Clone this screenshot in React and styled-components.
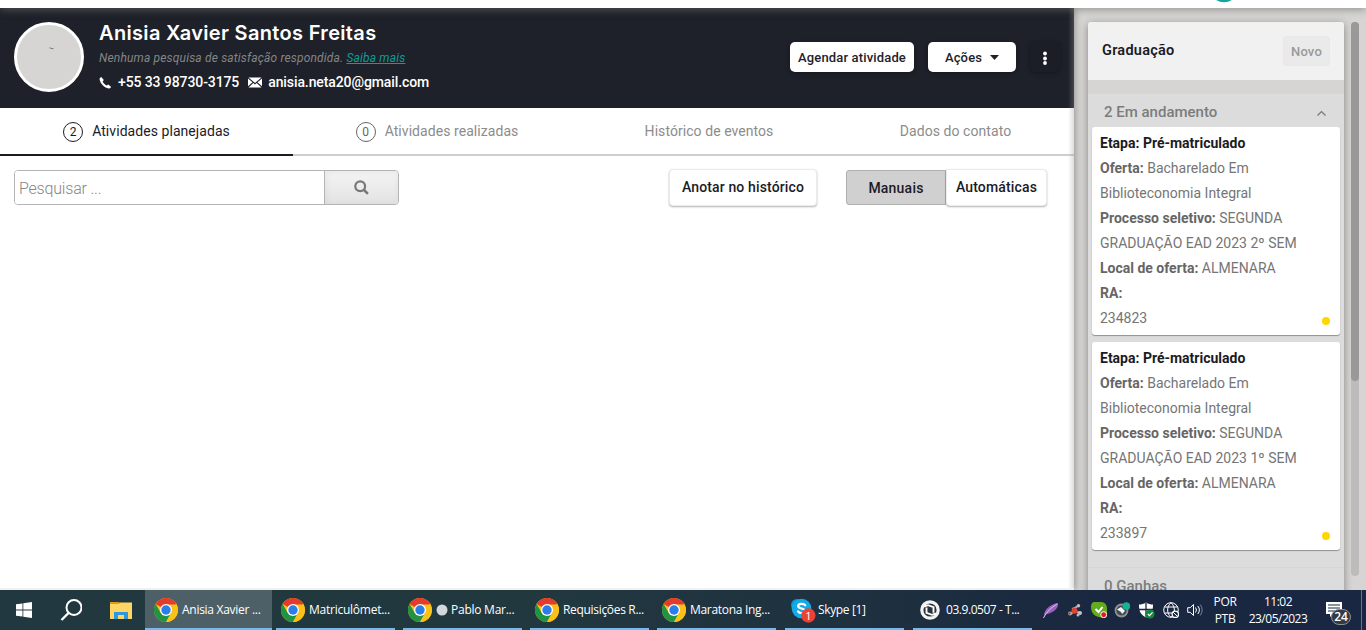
import React from "react";
import styled, { createGlobalStyle } from "styled-components";

const Global = createGlobalStyle`
  * { box-sizing: border-box; }
  body { margin: 0; background: #fff; overflow: hidden; font-family: Roboto, sans-serif; }
  button, input { font-family: inherit; }
  svg { display: block; flex: none; }
`;

const Screen = styled.div`
  width: 1366px;
  height: 630px;
  display: flex;
  flex-direction: column;
  overflow: hidden;
`;
const TopStrip = styled.div`
  height: 8px;
  flex: none;
  background: #fff;
  box-shadow: 0 1px 8px rgba(110, 110, 105, 0.75);
  position: relative;
  z-index: 3;
  padding-left: 1215px;
  overflow: visible;
  clip-path: inset(0 0 -14px 0);
`;
const Body = styled.div`
  height: 582px;
  flex: none;
  display: flex;
`;
const Main = styled.main`
  width: 1074px;
  background: #fff;
  position: relative;
  z-index: 1;
  box-shadow: 1px 0 7px rgba(0, 0, 0, 0.32);
  border-bottom: 2px solid #f1f1f1;
  &::after {
    content: "";
    position: absolute;
    inset: 0 0 0 auto;
    width: 6px;
    background: linear-gradient(to right, rgba(150, 150, 150, 0), rgba(150, 150, 150, 0.32));
  }
`;
const Hero = styled.header`
  height: 100px;
  background: #1e2129;
  display: flex;
  padding: 14px 14px 0;
`;
const Avatar = styled.div`
  width: 70px;
  height: 70px;
  border-radius: 50%;
  border: 3px solid #fff;
  background: #d6d5d3;
  padding: 22px 0 0 32px;
`;
const Identity = styled.div`
  margin-left: 15px;
  width: 691px;
  white-space: nowrap;
`;
const Name = styled.h1`
  margin: 0;
  font: 600 20px/22px Inter, sans-serif;
  letter-spacing: 0.33px;
  color: #fff;
`;
const Survey = styled.div`
  font: italic 400 12px/16px Roboto, sans-serif;
  letter-spacing: 0.17px;
  color: #858585;
  margin-top: 6px;
  a { color: #0f9d96; text-decoration: underline; }
`;
const Contacts = styled.div`
  display: flex;
  align-items: center;
  color: #fff;
  font: 500 14px/18px Roboto, sans-serif;
  letter-spacing: -0.1px;
  margin-top: 7px;
  svg { margin-right: 6px; }
  span { margin-right: 9px; }
`;
const HeroActions = styled.div`
  display: flex;
  gap: 14px;
  padding-top: 20px;
`;
const HeroButton = styled.button`
  width: ${(p) => p.$w}px;
  height: 30px;
  border: 0;
  padding: ${(p) => (p.$dark ? 2 : 0)}px 0 0;
  border-radius: 5px;
  display: flex;
  align-items: center;
  justify-content: center;
  gap: 8px;
  background: ${(p) => (p.$dark ? "#1b1e25" : "#fff")};
  color: #1e2129;
  font-size: 13px;
  font-weight: 500;
  letter-spacing: 0.15px;
  white-space: nowrap;
  box-shadow: 0 1px 4px rgba(0, 0, 0, 0.35);
`;
const Tabs = styled.nav`
  display: flex;
  height: 48px;
`;
const Tab = styled.div`
  width: ${(p) => p.$w}px;
  border-bottom: 2px solid ${(p) => (p.$active ? "#1b1b27" : "#cecece")};
  display: flex;
  align-items: center;
  justify-content: center;
  gap: 9px;
  font-size: 14px;
  letter-spacing: 0.06px;
  color: ${(p) => (p.$active ? "#1b1b27" : "#8c8c8c")};
`;
const Count = styled.span`
  width: 20px;
  height: 20px;
  margin-top: 1px;
  border: 1px solid ${(p) => (p.$active ? "#1b1b27" : "#666")};
  color: ${(p) => (p.$active ? "#1b1b27" : "#666")};
  border-radius: 50%;
  font-size: 12px;
  line-height: 18px;
  letter-spacing: 0;
  text-align: center;
`;
const Toolbar = styled.div`
  display: flex;
  padding: 13px 0 0 14px;
`;
const Search = styled.div`
  display: flex;
  width: 385px;
  height: 35px;
  margin: 1px 270px 0 0;
  border: 1px solid #b4b4b4;
  border-radius: 4px;
  overflow: hidden;
  input {
    width: 309px;
    border: 0;
    outline: 0;
    padding: 1px 4px 0;
    font-size: 16px;
    font-weight: 300;
    letter-spacing: -0.2px;
    color: #333;
  }
  input::placeholder { color: #858585; }
`;
const SearchButton = styled.button`
  flex: 1;
  border: 0;
  border-left: 1px solid #b4b4b4;
  background: linear-gradient(#f4f4f4, #e3e3e3);
  box-shadow: inset 1px 1px 6px rgba(130, 130, 130, 0.12);
  display: flex;
  align-items: center;
  justify-content: center;
  padding: 0 1px 0 0;
`;
const ToolButton = styled.button`
  width: ${(p) => p.$w}px;
  height: ${(p) => (p.$pressed ? 35 : 37)}px;
  margin: ${(p) => (p.$pressed ? "1px 0 0 29px" : "0")};
  padding: ${(p) => (p.$pressed ? "1px 0 0" : "0 0 2px")};
  border: 1px solid ${(p) => (p.$pressed ? "#b0b0b0" : "#ebebeb")};
  border-radius: ${(p) => (p.$pressed ? "3px 0 0 3px" : p.$joined ? "0 4px 4px 4px" : "4px")};
  background: ${(p) => (p.$pressed ? "#d0d0d0" : "#fff")};
  color: #1b1b27;
  font-size: 14px;
  font-weight: 500;
  letter-spacing: ${(p) => p.$ls}px;
  white-space: nowrap;
  box-shadow: ${(p) => (p.$pressed ? "none" : "0 1px 2px rgba(0,0,0,0.3)")};
`;
const Aside = styled.aside`
  width: 292px;
  background: #d6d5d3;
  padding: 14px 7px 0 14px;
  display: flex;
  gap: 7px;
  overflow: hidden;
`;
const Panel = styled.section`
  width: 256px;
  height: 590px;
  border-radius: 3px 3px 0 0;
  background: #dcdcdc;
  box-shadow: 0 2px 9px rgba(0, 0, 0, 0.38);
`;
const PanelHead = styled.header`
  height: 58px;
  border-radius: 3px 3px 0 0;
  background: #f1f1f1;
  display: flex;
  align-items: center;
  justify-content: space-between;
  padding: 0 14px;
  font-size: 14.5px;
  letter-spacing: 0.25px;
  color: #1b1b27;
  b { margin-top: -1px; font-weight: 600; }
`;
const NewButton = styled.button`
  width: 47px;
  height: 30px;
  padding: 0;
  border: 1px solid #e7e7e7;
  border-radius: 4px;
  background: #eaeaea;
  color: #999;
  font-size: 13px;
  font-weight: 500;
  letter-spacing: 0.2px;
`;
const PanelGap = styled.div`
  height: 14px;
  background: #d6d5d3;
`;
const SectionHead = styled.div`
  height: ${(p) => p.$h}px;
  display: flex;
  align-items: center;
  justify-content: space-between;
  padding: 1px 17px 0 16px;
  border-top: 1px solid ${(p) => (p.$line ? "#d6d6d6" : "#dcdcdc")};
  font-size: 15px;
  font-weight: 500;
  color: #7c7c7c;
  svg { margin-top: 3px; }
`;
const Cards = styled.div`
  padding: 0 4px;
  height: 440px;
  display: flex;
  flex-direction: column;
  gap: 7px;
`;
const Card = styled.article`
  height: 208px;
  padding: 4px 8px;
  border-radius: 3px;
  background: #fff;
  box-shadow: 0 1px 1px rgba(0, 0, 0, 0.35);
  font-size: 14px;
  line-height: 25px;
  color: #757575;
  position: relative;
  b { font-weight: 700; color: #666; }
  &::after {
    content: "";
    position: absolute;
    right: 10px;
    bottom: 10px;
    width: 8px;
    height: 8px;
    border-radius: 50%;
    background: #ffd600;
  }
`;
const Stage = styled.div`
  font-weight: 700;
  color: #1b1b1f;
`;
const Field = styled.div`
  width: 215px;
`;
const Track = styled.div`
  width: 8px;
  height: 554px;
  border-radius: 4px;
  background: #bcbcbc;
`;
const Thumb = styled.div`
  height: 359px;
  border-radius: 4px;
  background: #999;
`;
const Taskbar = styled.footer`
  height: 40px;
  flex: none;
  position: relative;
  z-index: 4;
  display: flex;
  color: #fff;
  font: 400 12px/16px "Open Sans", "Noto Sans", sans-serif;
  background: linear-gradient(to right, #213840 0%, #22383f 40%, #1e303f 65%, #1a2740 80%, #1a2743 100%);
`;
const Launcher = styled.div`
  width: 145px;
  display: flex;
  align-items: center;
  gap: 28px;
  padding-left: 16px;
`;
const Task = styled.div`
  width: ${(p) => p.$w}px;
  margin-right: ${(p) => p.$gap}px;
  padding: 1px 0 0 ${(p) => p.$pl}px;
  height: 40px;
  display: flex;
  align-items: center;
  gap: ${(p) => p.$space ?? 4}px;
  background: ${(p) => (p.$active ? "#4e6067" : "transparent")};
  border-bottom: 2px solid #76b9ed;
  white-space: nowrap;
`;
const TaskLabel = styled.span`
  font-size: 12px;
  letter-spacing: ${(p) => p.$ls}px;
`;
const Tray = styled.div`
  display: flex;
  align-items: center;
  gap: 7.8px;
  width: 165px;
  flex: none;
`;
const TrayText = styled.div`
  width: ${(p) => p.$w}px;
  flex: none;
  text-align: center;
  line-height: 17px;
  padding: 3px 0 0 2px;
  white-space: nowrap;
  letter-spacing: ${(p) => p.$ls}px;
`;
const Notices = styled.div`
  width: 48px;
  padding: 10px 0 0 10px;
  border-right: 1px solid #69738a;
`;

const Chrome = () => (
  <svg width="24" height="24" viewBox="0 0 24 24">
    <circle cx="12" cy="12" r="12" fill="#fbc116" />
    <path d="M12 12 1.6 6A12 12 0 0 1 22.4 6Z" fill="#e33b2e" />
    <path d="M1.6 6A12 12 0 0 0 12 24L17.2 15 12 12 6.8 15Z" fill="#229342" />
    <path d="M12 6.5H22.6A12 12 0 0 1 12 24L17 15Z" fill="#fbc116" />
    <circle cx="12" cy="12" r="6" fill="#fff" />
    <circle cx="12" cy="12" r="4.7" fill="#2b7de9" />
  </svg>
);

const RingLogo = () => (
  <svg width="20" height="22" viewBox="0 0 20 22">
    <circle cx="10" cy="11" r="8.2" fill="#27343d" stroke="#f4f4f4" strokeWidth="3.2" />
    <path d="M4 7.5 8 6.2l5.5 2v5.500M16 14.500l-4 1.300-5.500-2V8.500" fill="none" stroke="#fff" strokeWidth="1.900" />
  </svg>
);

const SkypeIcon = () => (
  <svg width="26" height="26" viewBox="0 0 26 26">
    <circle cx="7" cy="8" r="6" fill="#0796df" />
    <circle cx="15" cy="16" r="6" fill="#0796df" />
    <circle cx="11.5" cy="11.5" r="9.8" fill="#16a9e8" />
    <path d="M15.2 8.2C13.8 6.2 8.2 6.2 8.2 9c0 3.3 7 1.7 7 5 0 2.700-5.600 2.800-7.200.4" fill="none" stroke="#fff" strokeWidth="2.3" strokeLinecap="round" />
    <circle cx="18.3" cy="18.500" r="7.2" fill="#ea4335" />
    <text x="18.3" y="22.500" textAnchor="middle" fill="#fff" fontSize="11" fontFamily="Open Sans, sans-serif">1</text>
  </svg>
);

const tabs = [
  { w: 293, n: 2, t: "Atividades planejadas", active: true },
  { w: 288, n: 0, t: "Atividades realizadas" },
  { w: 256, t: "Histórico de eventos" },
  { w: 237, t: "Dados do contato" },
];

const offers = [
  { term: "2º", ra: "234823" },
  { term: "1º", ra: "233897" },
];

const chromeTasks = [
  { w: 127, gap: 4, pl: 9, t: "Anisia Xavier ...", active: true, ls: -0.28 },
  { w: 119, gap: 8, pl: 5, t: "Matriculômet...", ls: -0.25 },
  { w: 119, gap: 8, pl: 5, t: "Pablo Mar...", dot: true, ls: -0.25 },
  { w: 119, gap: 8, pl: 5, t: "Requisições R...", ls: -0.32 },
  { w: 119, gap: 9, pl: 5, t: "Maratona Ing...", ls: -0.3 },
];

export default function App() {
  return (
    <Screen>
      <Global />
      <TopStrip>
        <svg width="18" height="3" viewBox="0 0 18 3">
          <path d="M1 0h16q-8 4.500-16 0z" fill="#12a5a0" />
        </svg>
      </TopStrip>
      <Body>
        <Main>
          <Hero>
            <Avatar>
              <svg width="5" height="3" viewBox="0 0 5 3"><path d="M.5.800 2 1.300l2.500.5" stroke="#777" fill="none" /></svg>
            </Avatar>
            <Identity>
              <Name>Anisia Xavier Santos Freitas</Name>
              <Survey>Nenhuma pesquisa de satisfação respondida. <a>Saiba mais</a></Survey>
              <Contacts>
                <svg width="13" height="13" viewBox="0 0 13 13"><path d="M2.300 1 .6 2.200C.2 6.700 5.700 12.500 10.600 12.400L12.200 10.900 9.300 8.500 7.600 9.400C5.900 8.700 4.400 7 3.700 5.400L4.800 4Z" fill="#fff" /></svg>
                <span>+55 33 98730-3175</span>
                <svg width="14" height="11" viewBox="0 0 14 11"><path d="M.5.500h13L7 6zM0 1.500 4.500 5.300 0 9.300zM14 1.500 9.500 5.300 14 9.300zM5.300 6 7 7.400 8.700 6l4.800 4.500H.5z" fill="#fff" /></svg>
                <span>anisia.neta20@gmail.com</span>
              </Contacts>
            </Identity>
            <HeroActions>
              <HeroButton $w={124}>Agendar atividade</HeroButton>
              <HeroButton $w={88}>
                Ações
                <svg width="9" height="5" viewBox="0 0 9 5"><path d="M0 0h9L4.500 5z" fill="#1e2129" /></svg>
              </HeroButton>
              <HeroButton $w={30} $dark>
                <svg width="4" height="14" viewBox="0 0 4 14"><g fill="#fff"><circle cx="2" cy="2.500" r="1.900" /><circle cx="2" cy="7.500" r="1.900" /><circle cx="2" cy="12" r="1.900" /></g></svg>
              </HeroButton>
            </HeroActions>
          </Hero>
          <Tabs>
            {tabs.map((t) => (
              <Tab key={t.t} $w={t.w} $active={t.active}>
                {t.n !== undefined && <Count $active={t.active}>{t.n}</Count>}
                {t.t}
              </Tab>
            ))}
          </Tabs>
          <Toolbar>
            <Search>
              <input placeholder="Pesquisar ..." />
              <SearchButton>
                <svg width="15" height="15" viewBox="0 0 15 15" fill="none" stroke="#777"><circle cx="6.200" cy="6.200" r="4.900" strokeWidth="2.200" /><path d="m9.700 9.700 4.200 4.200" strokeWidth="2.600" /></svg>
              </SearchButton>
            </Search>
            <ToolButton $w={148} $ls={0.14}>Anotar no histórico</ToolButton>
            <ToolButton $w={100} $ls={0.22} $pressed>Manuais</ToolButton>
            <ToolButton $w={101} $ls={0.16} $joined>Automáticas</ToolButton>
          </Toolbar>
        </Main>
        <Aside>
          <Panel>
            <PanelHead><b>Graduação</b><NewButton>Novo</NewButton></PanelHead>
            <PanelGap />
            <SectionHead $h={33}>
              2 Em andamento
              <svg width="11" height="7" viewBox="0 0 11 7"><path d="m1.500 5.500 4-4 4 4" fill="none" stroke="#777" strokeWidth="1.200" /></svg>
            </SectionHead>
            <Cards>
              {offers.map((o) => (
                <Card key={o.ra}>
                  <Stage>Etapa: Pré-matriculado</Stage>
                  <Field><b>Oferta:</b> Bacharelado Em Biblioteconomia Integral</Field>
                  <Field><b>Processo seletivo:</b> SEGUNDA GRADUAÇÃO EAD 2023 {o.term} SEM</Field>
                  <Field><b>Local de oferta:</b> ALMENARA</Field>
                  <Field><b>RA:</b></Field>
                  <Field>{o.ra}</Field>
                </Card>
              ))}
            </Cards>
            <SectionHead $h={36} $line>0 Ganhas</SectionHead>
          </Panel>
          <Track><Thumb /></Track>
        </Aside>
      </Body>
      <Taskbar>
        <Launcher>
          <svg width="16" height="16" viewBox="0 0 16 16" fill="#fff"><path d="M0 2.300 6.500 1.400V7.500H0zM7.300 1.300 16 0V7.500H7.300zM0 8.400H6.500V14.600L0 13.700zM7.300 8.400H16V16L7.300 14.700z" /></svg>
          <svg width="22" height="22" viewBox="0 0 22 22" fill="none" stroke="#fff" strokeWidth="2"><circle cx="14" cy="8.500" r="7.500" /><path d="M8.500 14 1.500 21" strokeWidth="2.400" /></svg>
          <svg width="22" height="19" viewBox="0 0 22 19"><path d="M0 1h9l2 2h-11z" fill="#dc9b10" /><path d="M0 3h9l1-1.500h12V18H0z" fill="#ffd663" /><path d="M4 18v-7h14v7h-4v-4H8v4z" fill="#3096dd" /></svg>
        </Launcher>
        {chromeTasks.map((t) => (
          <Task key={t.t} $w={t.w} $gap={t.gap} $pl={t.pl} $active={t.active} $space={t.dot ? 3.5 : 4}>
            <Chrome />
            {t.dot && <svg width="12" height="12" viewBox="0 0 12 12"><circle cx="6" cy="6" r="5.500" fill="#d3d8dc" /></svg>}
            <TaskLabel $ls={t.ls}>{t.t}</TaskLabel>
          </Task>
        ))}
        <Task $w={119} $gap={9} $pl={5} $space={2}><SkypeIcon /><TaskLabel $ls={-0.35}>Skype [1]</TaskLabel></Task>
        <Task $w={119} $gap={11} $pl={7} $space={6}><RingLogo /><TaskLabel $ls={-0.45}>03.9.0507 - T...</TaskLabel></Task>
        <Tray>
          <svg width="16" height="18" viewBox="0 0 16 18"><path d="M1 15C1 8 8 3 15 2c1 5-5 10-11 11z" fill="#9a62bd" /><path d="M.5 17C4 10 8 7 14 3" stroke="#e3c4f4" fill="none" /></svg>
          <svg width="16" height="16" viewBox="0 0 16 16"><path d="m5 7 3-1 4-3M4 12l3-3M10 10l3 1" stroke="#a9aaad" strokeWidth="2" fill="none" /><circle cx="7.500" cy="8.800" r="3" fill="#e04433" /><circle cx="3" cy="11.500" r="2" fill="#b9a5a0" /><circle cx="2.500" cy="11.500" r="1" fill="#8d3b2d" /><circle cx="13" cy="11" r="2" fill="#c3c5c8" /><circle cx="11" cy="13" r="1.500" fill="#bbb" /><circle cx="11.500" cy="3.800" r="1.700" fill="#c9bab8" /></svg>
          <svg width="16" height="16" viewBox="0 0 16 16"><path d="M4 0h6c4 0 6 3 6 7v4c0 3-2 4.500-5 4.500C5 15.500 0 12 0 5c0-3 1-5 4-5z" fill="#62ab1d" /><path d="m4.500 7 3 3 4-5" fill="none" stroke="#fff" strokeWidth="2" /><circle cx="12.700" cy="12.700" r="3" fill="#e21b22" stroke="#fff" /></svg>
          <svg width="16" height="16" viewBox="0 0 16 16"><circle cx="7.500" cy="8.500" r="6" fill="#414850" stroke="#8d9297" strokeWidth="1.800" /><path d="M3 7.500 7 5l4 4-3 3-1-2z" fill="#f4f4f4" /><circle cx="12.300" cy="4" r="3.800" fill="#12b493" /></svg>
          <svg width="17" height="17" viewBox="0 0 17 17"><path d="M8 .5C6 2 3 2.500 1 2.500 1 9 2 12 8 15.500 14 12 15 9 15 2.500 13 2.500 10 2 8 .5z" fill="#fff" /><path d="M8 1v14M1 7.500h14" stroke="#1a2740" strokeWidth="1.300" /><circle cx="12" cy="12" r="4.600" fill="#10893e" /><path d="m9.800 12 1.700 1.700 3-3.300" stroke="#fff" fill="none" strokeWidth="1.200" /></svg>
          <svg width="16" height="16" viewBox="0 0 16 16" fill="none" stroke="#fff"><circle cx="8" cy="8" r="7.300" /><path d="M8 .7c-4.500 4-4.500 10.600 0 14.600M8 .7c4.500 4 4.500 10.600 0 14.600M1.500 5h13M1.500 11H9" /><circle cx="12.300" cy="12.300" r="3.200" fill="#1a2740" strokeWidth="1.300" /><path d="m10 10 4.600 4.600" /></svg>
          <svg width="16" height="16" viewBox="0 0 16 16" fill="none" stroke="#fff"><path d="M.7 5.700h2.500L6.500 2.500v11L3.200 10.300H.7z" /><path d="M8.500 5.500q2 2.500 0 5M10.800 4q3.200 4 0 8" /><path d="M13.200 2.500q4 5.500 0 11" stroke="#77819a" /></svg>
        </Tray>
        <TrayText $w={32} $ls={-0.3}>POR<br />PTB</TrayText>
        <TrayText $w={74} $ls={-0.5}>11:02<br />23/05/2023</TrayText>
        <Notices>
          <svg width="28" height="28" viewBox="0 0 28 28"><path d="M2 2h16v12H9l-3 3v-3H2z" fill="#fff" /><path d="M4 5h12M4 8h12M4 11h9" stroke="#1a2740" strokeWidth="1.200" /><rect x="7.500" y="9.500" width="19" height="15" rx="7.500" fill="#343a43" stroke="#8b9099" /><text x="17" y="21.300" textAnchor="middle" fill="#fff" fontSize="12" fontWeight="600" fontFamily="Open Sans, sans-serif">24</text></svg>
        </Notices>
      </Taskbar>
    </Screen>
  );
}
